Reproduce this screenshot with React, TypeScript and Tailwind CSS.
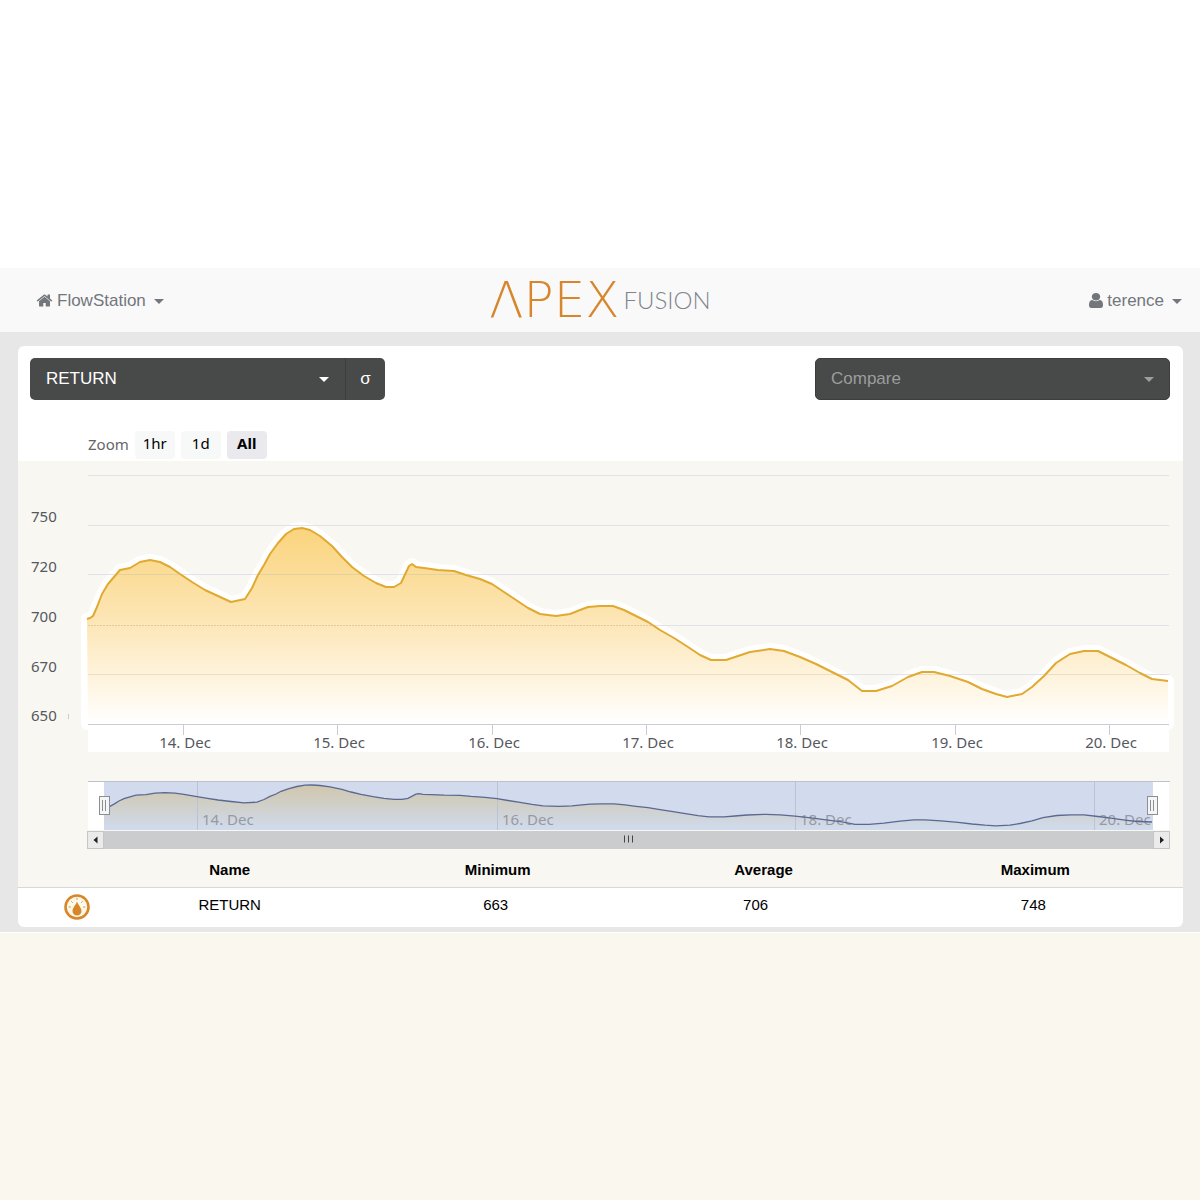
type Point = [number, number];

const SERIES: Point[] = [
  [87, 619], [90, 618], [93, 616], [97, 607], [102, 594], [108, 584], [114, 577], [120, 570], [130, 568],
  [140, 562], [150, 560], [160, 562], [170, 567], [180, 574], [192, 582], [205, 590], [218, 596], [231, 602],
  [245, 599], [252, 588], [258, 575], [264, 565], [270, 554], [278, 543], [286, 534], [294, 529], [302, 528],
  [310, 530], [320, 536], [332, 546], [342, 557], [352, 567], [364, 576], [376, 583], [386, 587], [394, 587],
  [401, 583], [409, 566], [412, 564], [416, 567], [424, 568], [438, 570], [454, 571], [466, 575], [480, 579],
  [492, 584], [504, 592], [516, 600], [528, 608], [540, 614], [556, 616], [570, 614], [580, 610], [588, 607],
  [600, 606], [613, 606], [624, 610], [636, 616], [648, 622], [660, 630], [674, 638], [688, 647], [700, 655],
  [711, 660], [726, 660], [738, 656], [750, 652], [770, 649], [784, 651], [800, 657], [816, 664], [832, 672],
  [848, 680], [862, 691], [876, 691], [892, 686], [908, 677], [922, 672], [934, 672], [950, 676], [968, 682],
  [982, 689], [996, 694], [1007, 697], [1022, 694], [1032, 687], [1044, 676], [1056, 663], [1070, 654],
  [1084, 651], [1098, 651], [1112, 658], [1126, 665], [1140, 673], [1152, 679], [1168, 681],
];

const AXIS_Y = [
  { label: "750", y: 517 },
  { label: "720", y: 567 },
  { label: "700", y: 617 },
  { label: "670", y: 667 },
  { label: "650", y: 716 },
];

const GRID_Y = [475, 525, 574, 625, 674];

const AXIS_X = [
  { label: "14. Dec", x: 184 },
  { label: "15. Dec", x: 338 },
  { label: "16. Dec", x: 493 },
  { label: "17. Dec", x: 647 },
  { label: "18. Dec", x: 801 },
  { label: "19. Dec", x: 956 },
  { label: "20. Dec", x: 1110 },
];

const NAV_X = [
  { label: "14. Dec", x: 197 },
  { label: "16. Dec", x: 497 },
  { label: "18. Dec", x: 795 },
  { label: "20. Dec", x: 1094 },
];

const STATS = [{ name: "RETURN", min: 663, avg: 706, max: 748 }];

const toLine = (points: Point[]) => "M" + points.map(([x, y]) => `${x} ${y}`).join("L");

const line = toLine(SERIES);
const navLine = toLine(
  SERIES.map(([x, y]): Point => [
    Math.round(104 + (x - 87) * 0.9695),
    Math.round((785 + (y - 528) * 0.242) * 10) / 10,
  ])
);

function Caret({ className = "" }: { className?: string }) {
  return (
    <svg viewBox="0 0 10 5" className={`h-[5px] w-[10px] ${className}`} fill="currentColor" aria-hidden="true">
      <path d="M0 0h10L5 5z" />
    </svg>
  );
}

function HomeIcon() {
  return (
    <svg viewBox="0 0 1792 1792" className="size-[17px]" fill="currentColor" aria-hidden="true">
      <path d="M1472 992v480q0 26-19 45t-45 19h-384v-384h-256v384h-384q-26 0-45-19t-19-45v-480q0-1 .5-3t.5-3l575-474 575 474q1 2 1 6zm223-69l-62 74q-8 9-21 11h-3q-13 0-21-7l-692-577-692 577q-12 8-24 7-13-2-21-11l-62-74q-8-10-7-23.500t11-21.500l719-599q32-26 76-26t76 26l244 204v-195q0-14 9-23t23-9h192q14 0 23 9t9 23v408l219 182q10 8 11 21.500t-7 23.500z" />
    </svg>
  );
}

function UserIcon() {
  return (
    <svg viewBox="0 128 1280 1536" className="h-[15px] w-[14px]" fill="currentColor" preserveAspectRatio="none" aria-hidden="true">
      <path d="M1280 1399q0 109-62.500 187t-150.500 78h-854q-88 0-150.500-78t-62.500-187q0-85 8.500-160.500t31.500-152 58.500-131 94-89 134.500-34.500q131 128 313 128t313-128q76 0 134.500 34.500t94 89 58.500 131 31.500 152 8.500 160.500zm-256-887q0 159-112.500 271.500t-271.500 112.500-271.500-112.500-112.500-271.500 112.500-271.500 271.500-112.500 271.500 112.500 112.500 271.500z" />
    </svg>
  );
}

function Header() {
  return (
    <header className="grid h-16 grid-cols-[1fr_auto_1fr] items-center bg-[#f9f9fa] px-[18px] text-[17px] text-[#73767a]">
      <button type="button" className="flex items-center gap-1 justify-self-start pl-[18px] pt-px">
        <HomeIcon />
        FlowStation
        <Caret className="ml-1 mt-[2px]" />
      </button>
      <a href="#" aria-label="Apex Fusion" className="flex items-center gap-1 leading-none">
        <span className="font-['DejaVu_Sans',sans-serif] text-[50px] font-extralight text-[#d8862c]">ΛPEX</span>
        <span className="font-[Lato,sans-serif] text-2xl font-light text-[#7f838b]">FUSION</span>
      </a>
      <button type="button" className="flex items-center gap-1 justify-self-end pt-px">
        <UserIcon />
        terence
        <Caret className="ml-1 mt-[2px]" />
      </button>
    </header>
  );
}

function Toolbar() {
  return (
    <div className="flex items-start justify-between pl-3 pr-[13px] pt-3 text-[17px]">
      <div className="flex h-[42px] w-[355px] rounded-[5px] bg-[#484a49] text-white">
        <button type="button" className="flex flex-1 items-center justify-between px-4">
          RETURN
          <Caret />
        </button>
        <button type="button" className="w-10 rounded-r-[5px] border-l border-[#3c3e3d]">
          σ
        </button>
      </div>
      <button
        type="button"
        className="flex h-[42px] w-[355px] items-center justify-between rounded-[5px] border border-[#3c3e3d] bg-[#484a49] px-[15px] text-[#9b9d9f]"
      >
        Compare
        <Caret />
      </button>
    </div>
  );
}

function ZoomButtons() {
  return (
    <div className="flex items-center gap-[6px] pb-[2px] pl-[70px] pt-[31px] font-['Noto_Sans',sans-serif] text-[15px] text-black">
      <span className="pb-px text-[#666]">Zoom</span>
      <button type="button" className="h-7 w-10 rounded-sm bg-[#f7f8f8] pb-1">1hr</button>
      <button type="button" className="h-7 w-10 rounded-sm bg-[#f7f8f8] pb-1">1d</button>
      <button type="button" className="h-7 w-10 rounded-sm bg-[#e9e9ee] pb-1 font-bold">All</button>
    </div>
  );
}

function Handle({ x }: { x: number }) {
  return (
    <g stroke="#8b8e95">
      <rect x={x - 4.5} y="796.5" width="10" height="18" fill="#f5f5f5" />
      <path d={`M${x - 1.5} 800v11M${x + 1.5} 800v11`} />
    </g>
  );
}

function Chart() {
  return (
    <svg
      viewBox="18 461 1165 391"
      className="block w-full bg-[#f8f7f2] font-['Noto_Sans',sans-serif] text-[15px]"
      role="img"
      aria-label="RETURN flow, 14 to 20 December"
    >
      <defs>
        <linearGradient id="area" gradientUnits="userSpaceOnUse" x1="0" y1="528" x2="0" y2="724">
          <stop offset="0" stopColor="#fad47d" />
          <stop offset="0.5" stopColor="#fde7b9" />
          <stop offset="1" stopColor="#ffffff" />
        </linearGradient>
        <linearGradient id="nav" gradientUnits="userSpaceOnUse" x1="0" y1="785" x2="0" y2="830">
          <stop offset="0" stopColor="#d0c6ab" />
          <stop offset="1" stopColor="#d0dbee" />
        </linearGradient>
      </defs>

      {/* PLOT */}
      <path d={`${line}V724H87z`} fill="#ffffff" stroke="#ffffff" strokeWidth="12" strokeLinejoin="round" />
      <path d="M88 725H1169V752H88z" fill="#ffffff" />
      {GRID_Y.map((y) => (
        <path key={y} d={`M88 ${y + 0.5}H1169`} stroke="#e1e3e8" />
      ))}
      <path d={`${line}V724H88z`} fill="url(#area)" />
      <path d="M118 574.5H180M259 574.5H361M406 574.5H464" stroke="#e4cfa1" />
      <path d="M88 625.5H652" stroke="#dfc99e" strokeDasharray="2 1" />
      <path d="M88 674.5H836M915 674.5H943M1046 674.5H1142" stroke="#ecdcc0" />
      <path d={line} fill="none" stroke="#e0a92f" strokeWidth="2" strokeLinejoin="round" />

      {/* AXES */}
      <path d="M88 724.5H1169" stroke="#c8ccd4" />
      <path d="M68.5 714v5" stroke="#c8ccd4" />
      {AXIS_Y.map(({ label, y }) => (
        <text key={label} x="31" y={y + 5} fill="#55585e">{label}</text>
      ))}
      {AXIS_X.map(({ label, x }) => (
        <g key={label}>
          <path d={`M${x - 0.5} 725v10`} stroke="#c8ccd4" />
          <text x={x + 1} y="748" textAnchor="middle" fill="#55585e">{label}</text>
        </g>
      ))}

      {/* NAVIGATOR */}
      <path d="M88 782H1169V830H88z" fill="#ffffff" />
      <path d="M104 782H1153V830H104z" fill="#d1dbed" />
      <path d={`${navLine}V830H104z`} fill="url(#nav)" />
      {NAV_X.map(({ label, x }) => (
        <g key={label}>
          <path d={`M${x + 0.5} 782v48`} stroke="#bcc3d0" />
          <text x={x + 5} y="825" fill="#969aa3">{label}</text>
        </g>
      ))}
      <path d={navLine} fill="none" stroke="#5b6890" strokeWidth="1.3" />
      <path d="M88 781.5H1170" stroke="#bdc1c8" />
      <Handle x={104} />
      <Handle x={1152} />

      {/* SCROLLBAR */}
      <path d="M87 831H1170V849H87z" fill="#cbcccd" />
      <g fill="#ebebeb" stroke="#c6c6c6">
        <rect x="87.5" y="831.5" width="16" height="17" />
        <rect x="1153.5" y="831.5" width="16" height="17" />
      </g>
      <path d="M97.500 836.500v7l-4-3.500zM1160 836.500v7l4-3.500z" fill="#222" />
      <path d="M624.500 835.500v7M628.500 835.500v7M632.500 835.500v7" stroke="#444" />
    </svg>
  );
}

function GaugeIcon() {
  return (
    <svg viewBox="0 0 26 26" className="mx-auto size-[26px]" aria-hidden="true">
      <circle cx="13" cy="13" r="11.500" fill="#fff8e6" stroke="#d8862c" strokeWidth="2.600" />
      <path d="M13 7.500c1 3.500 4.500 6 4.500 9.500a4.500 4.500 0 0 1-9 0c0-3.500 3.500-6 4.500-9.500z" fill="#d8862c" />
      <path d="M5 13h1.500M19.500 13H21M7.500 7.500l1 1M18.500 7.500l-1 1M13 4v1.500" stroke="#a9a38d" strokeLinecap="round" />
    </svg>
  );
}

function StatsTable() {
  return (
    <table className="w-full table-fixed text-center text-[15px] text-black">
      <colgroup>
        <col className="w-[7%]" />
        <col className="w-[22%]" />
        <col className="w-[24%]" />
        <col className="w-[22%]" />
        <col className="w-[25%]" />
      </colgroup>
      <thead>
        <tr className="h-[35px] border-b border-[#d6d8db] bg-[#f8f7f2]">
          <th aria-label="Type"></th>
          <th className="pl-1 pt-[2px]">Name</th>
          <th className="pl-1 pt-[2px]">Minimum</th>
          <th className="pt-[2px]">Average</th>
          <th className="pr-1 pt-[2px]">Maximum</th>
        </tr>
      </thead>
      <tbody>
        {STATS.map((row) => (
          <tr key={row.name} className="h-10">
            <td className="pl-9"><GaugeIcon /></td>
            <td className="pb-1 pl-1">{row.name}</td>
            <td className="pb-1">{row.min}</td>
            <td className="pb-1 pr-4">{row.avg}</td>
            <td className="pb-1 pr-2">{row.max}</td>
          </tr>
        ))}
      </tbody>
    </table>
  );
}

export default function App() {
  return (
    <div className="flex min-h-screen flex-col bg-[#f9f7ee] font-['Liberation_Sans',Arial,sans-serif]">
      <div className="h-[268px] bg-white" />
      <Header />
      <main className="border-b border-white bg-[#e7e7e7] pb-[5px] pl-[18px] pr-[17px] pt-[14px]">
        <div className="overflow-hidden rounded-md bg-white">
          <Toolbar />
          <ZoomButtons />
          <Chart />
          <StatsTable />
        </div>
      </main>
    </div>
  );
}
